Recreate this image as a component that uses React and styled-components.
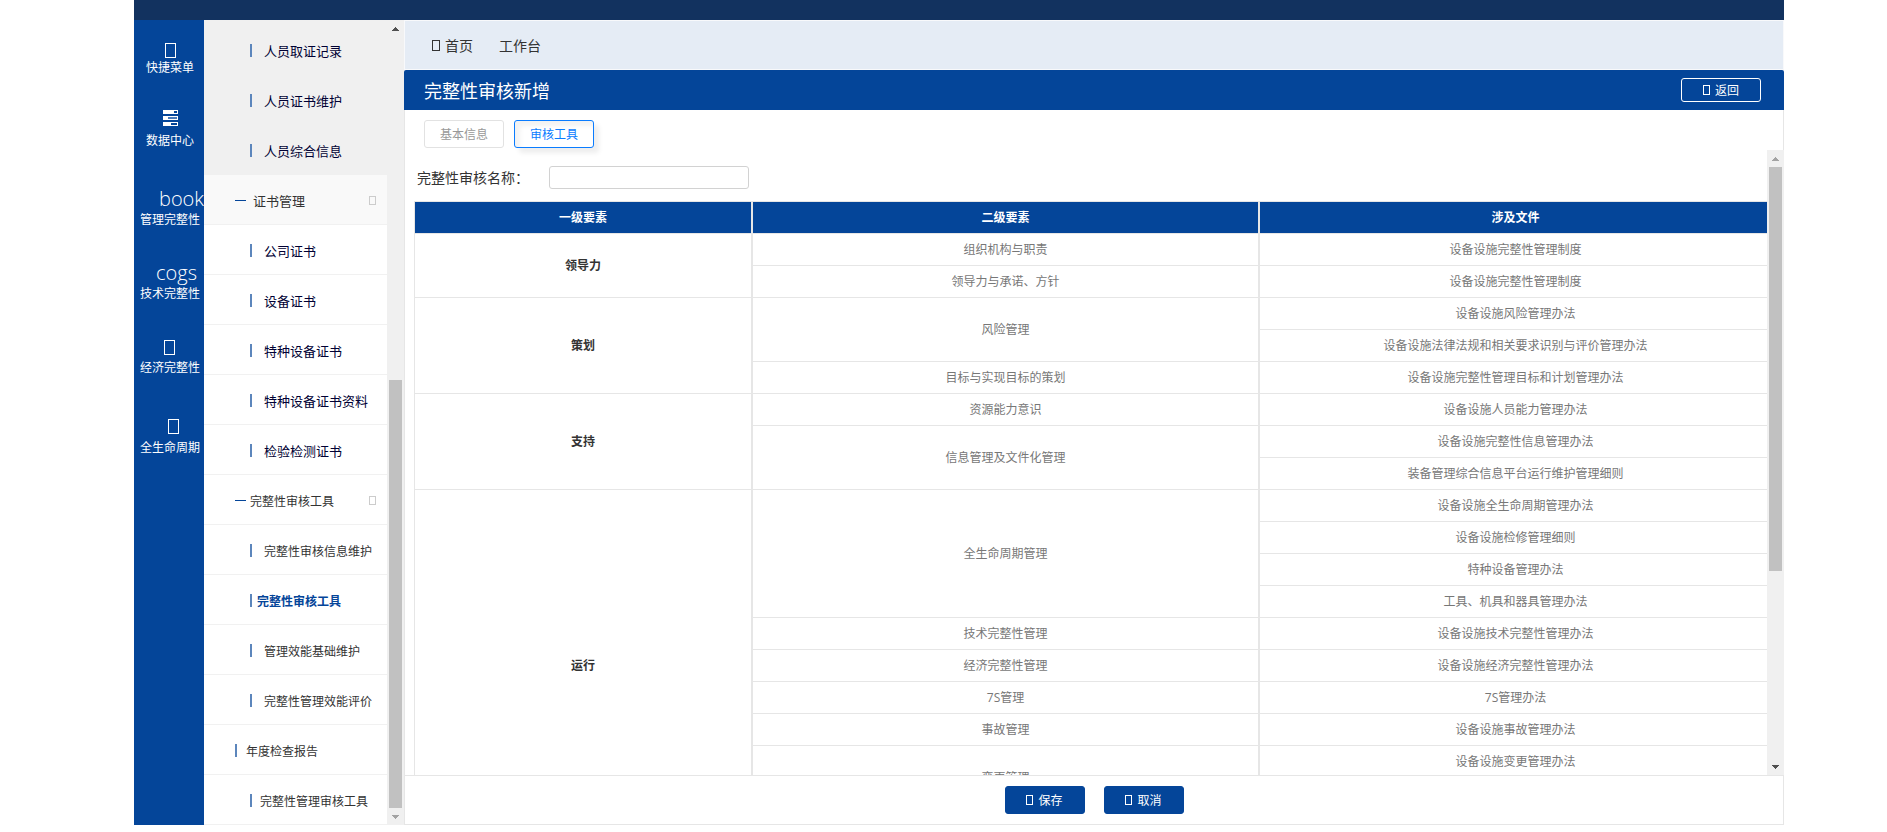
import React from 'react';
import styled, { createGlobalStyle } from 'styled-components';

const blue = '#044599';
const line = '#e6e6e6';

const GlobalStyle = createGlobalStyle`
  * {
    box-sizing: border-box;
  }
  body {
    margin: 0;
    background: #fff;
    color: #333;
    font-family: 'Open Sans', 'Noto Sans CJK SC', sans-serif;
    font-size: 12px;
    font-weight: 400;
  }
  button, input {
    font: inherit;
  }
  a {
    color: inherit;
    text-decoration: none;
  }
`;

const Page = styled.div`
  display: flex;
  flex-direction: column;
  height: calc(100vh - 7px);
  margin: 0 103px 0 134px;
`;

const TopBar = styled.header`
  flex: none;
  height: 20px;
  background: #12325f;
`;

const Columns = styled.div`
  display: flex;
  flex: 1;
  min-height: 0;
`;

const Rail = styled.nav`
  flex: none;
  width: 70px;
  padding-top: 1px;
  overflow: hidden;
  background: ${blue};
  color: #fff;
`;

const RailItem = styled.a`
  display: flex;
  flex-direction: column;
  justify-content: flex-end;
  align-items: center;
  height: ${(props) => props.$height}px;
  line-height: 16px;
  white-space: nowrap;
`;

const RailIcon = styled.span`
  display: flex;
  align-items: center;
  height: ${(props) => props.$height || 24}px;
  padding-left: ${(props) => props.$indent || 0}px;
  font-size: 20px;
  font-weight: 300;
  line-height: 24px;
`;

const RailLabel = styled.span`
  padding-left: 2px;
`;

const Menu = styled.nav`
  flex: none;
  display: flex;
  width: 200px;
  background: #f0f0f0;
`;

const MenuList = styled.div`
  flex: 1;
  padding-top: 5px;
  overflow: hidden;
`;

const MenuItem = styled.a`
  display: flex;
  align-items: center;
  gap: ${(props) => props.$gap || 12}px;
  height: 50px;
  padding: 2px 11px 0 ${(props) => (props.$top ? 31 : 46)}px;
  border-bottom: 1px solid ${(props) => (props.$tone === 'grey' ? '#f0f0f0' : '#f1f1f1')};
  background: ${(props) => ({ grey: '#f0f0f0', open: '#f9f9f9' }[props.$tone] || '#fff')};
  color: ${(props) => (props.$active ? blue : props.$big ? '#003' : '#333')};
  font-size: ${(props) => (props.$big || props.$tone === 'open' ? 13 : 12)}px;
  font-weight: ${(props) => (props.$active ? 700 : 400)};
  white-space: nowrap;
`;

const Pipe = styled.span`
  width: 2px;
  height: 13px;
  background: #5c86bc;
`;

const Dash = styled.span`
  width: 11px;
  height: 1px;
  background: ${blue};
`;

const Spacer = styled.span`
  flex: 1;
`;

const Bar = styled.div`
  flex: none;
  display: flex;
  flex-direction: column;
  width: 17px;
  padding: 0 2px;
  background: #f0f0f0;
`;

const BarEnd = styled.div`
  flex: none;
  display: flex;
  align-items: center;
  justify-content: center;
  height: 17px;
`;

const BarGap = styled.div`
  flex: ${(props) => props.$grow} 0 0;
`;

const BarThumb = styled(BarGap)`
  background: #c1c1c1;
`;

const Main = styled.main`
  flex: 1;
  display: flex;
  flex-direction: column;
  min-width: 0;
`;

const Crumbs = styled.nav`
  flex: none;
  display: flex;
  align-items: center;
  gap: 26px;
  height: 50px;
  padding: 0 27px;
  border: 1px solid #f8f9fb;
  background: #e5ecf5;
  font-size: 14px;

  a {
    display: flex;
    align-items: center;
    gap: 5px;
  }
`;

const TitleBar = styled.div`
  flex: none;
  display: flex;
  align-items: center;
  justify-content: space-between;
  height: 40px;
  padding: 0 23px 0 20px;
  border-radius: 2px 2px 0 0;
  background: ${blue};
  color: #fff;
`;

const Title = styled.h1`
  margin: 0;
  font-size: 18px;
  font-weight: 400;
`;

const Button = styled.button`
  display: flex;
  align-items: center;
  justify-content: center;
  gap: 5px;
  width: 80px;
  height: ${(props) => (props.$outline ? 24 : 28)}px;
  padding: 0;
  border: 1px solid ${(props) => (props.$outline ? '#fff' : blue)};
  border-radius: 3px;
  background: ${blue};
  color: #fff;
`;

const Tabs = styled.div`
  flex: none;
  display: flex;
  gap: 10px;
  height: 40px;
  padding: 10px 19px 0;
  border: solid ${line};
  border-width: 0 1px;
`;

const Tab = styled.button`
  width: 80px;
  height: 28px;
  padding: 0;
  border: 1px solid ${(props) => (props.$active ? '#0a7cff' : '#e2e2e2')};
  border-radius: 3px;
  background: #fff;
  box-shadow: ${(props) => (props.$active ? '5px 5px 5px #eee, inset 5px 5px 5px #f2f2f2' : 'none')};
  color: ${(props) => (props.$active ? '#0a7cff' : '#999')};
`;

const Body = styled.div`
  flex: 1;
  display: flex;
  min-height: 0;
  border-left: 1px solid ${line};
`;

const Scroll = styled.div`
  flex: 1;
  min-width: 0;
  padding: 16px 0 0 9px;
  overflow: hidden;
`;

const Field = styled.div`
  display: flex;
  align-items: center;
  margin-bottom: 12px;
`;

const Label = styled.label`
  width: 135px;
  padding-left: 3px;
  font-size: 14px;
  line-height: 22px;
`;

const Input = styled.input`
  width: 200px;
  height: 23px;
  padding: 0 6px;
  border: 1px solid #d2d2d2;
  border-radius: 3px;
`;

const Table = styled.table`
  width: 100%;
  table-layout: fixed;
  border-spacing: 0;
  border: solid ${line};
  border-width: 1px 0 0 1px;
  color: #777;
  text-align: center;

  th, td {
    height: 32px;
    padding: 0 0 2px;
    border: solid ${line};
    border-width: 0 2px 1px 0;
  }
  th:last-child, td:last-child {
    padding-left: 4px;
    border-right: 0;
  }
  thead th {
    background: ${blue};
    color: #fff;
    font-weight: 700;
  }
  tbody th {
    color: #333;
    font-weight: 700;
  }
`;

const Footer = styled.footer`
  flex: none;
  display: flex;
  align-items: center;
  justify-content: center;
  gap: 19px;
  height: 50px;
  border: 1px solid ${line};
`;

const railItems = [
  { label: '快捷菜单', icon: 'box', height: 55, indent: 3, iconHeight: 20 },
  { label: '数据中心', icon: 'server', height: 73, indent: 2, iconHeight: 30 },
  { label: '管理完整性', text: 'book', height: 79, indent: 25, iconHeight: 26 },
  { label: '技术完整性', text: 'cogs', height: 74, indent: 15, iconHeight: 26 },
  { label: '经济完整性', icon: 'box', height: 74, indent: 1, iconHeight: 26 },
  { label: '全生命周期', icon: 'box', height: 80, indent: 9, iconHeight: 28 },
];

const menuItems = [
  { label: '人员取证记录', tone: 'grey', big: true },
  { label: '人员证书维护', tone: 'grey', big: true },
  { label: '人员综合信息', tone: 'grey', big: true },
  { label: '证书管理', tone: 'open', group: true, gap: 7 },
  { label: '公司证书', big: true },
  { label: '设备证书', big: true },
  { label: '特种设备证书', big: true },
  { label: '特种设备证书资料', big: true },
  { label: '检验检测证书', big: true },
  { label: '完整性审核工具', group: true, gap: 4 },
  { label: '完整性审核信息维护' },
  { label: '完整性审核工具', active: true, gap: 5 },
  { label: '管理效能基础维护' },
  { label: '完整性管理效能评价' },
  { label: '年度检查报告', top: true, gap: 9 },
  { label: '完整性管理审核工具', gap: 8 },
];

// [level one, its rows, [[level two, files], ...]]
const elements = [
  ['领导力', 2, [
    ['组织机构与职责', ['设备设施完整性管理制度']],
    ['领导力与承诺、方针', ['设备设施完整性管理制度']],
  ]],
  ['策划', 3, [
    ['风险管理', ['设备设施风险管理办法', '设备设施法律法规和相关要求识别与评价管理办法']],
    ['目标与实现目标的策划', ['设备设施完整性管理目标和计划管理办法']],
  ]],
  ['支持', 3, [
    ['资源能力意识', ['设备设施人员能力管理办法']],
    ['信息管理及文件化管理', ['设备设施完整性信息管理办法', '装备管理综合信息平台运行维护管理细则']],
  ]],
  ['运行', 11, [
    ['全生命周期管理', ['设备设施全生命周期管理办法', '设备设施检修管理细则', '特种设备管理办法', '工具、机具和器具管理办法']],
    ['技术完整性管理', ['设备设施技术完整性管理办法']],
    ['经济完整性管理', ['设备设施经济完整性管理办法']],
    ['7S管理', ['7S管理办法']],
    ['事故管理', ['设备设施事故管理办法']],
    ['变更管理', ['设备设施变更管理办法', '']],
    ['', ['']],
  ]],
];

const Glyph = ({ width, height, color = 'currentColor' }) => (
  <svg width={width} height={height} aria-hidden="true">
    <rect x="0.5" y="0.5" width={width - 1} height={height - 1} fill="none" stroke={color} />
  </svg>
);

const ServerIcon = () => (
  <svg width="15" height="16" shapeRendering="crispEdges" aria-hidden="true">
    <path fill="#fff" d="M0 0h15v4H0zM0 6h15v4H0zM0 12h15v4H0z" />
    <path fill={blue} d="M11 1h3v2h-3zM8 13h6v2H8z" />
    <path fill="#4a7ab8" d="M5 7h9v2H5z" />
  </svg>
);

const Arrow = ({ down, color }) => (
  <svg width="7" height="4" shapeRendering="crispEdges" aria-hidden="true">
    <path fill={color} d={down ? 'M0 0h7v1H6v1H5v1H4v1H3V3H2V2H1V1H0z' : 'M3 0h1v1h1v1h1v1h1v1H0V3h1V2h1V1h1z'} />
  </svg>
);

const ScrollBar = ({ before, thumb, after, upColor, downColor }) => (
  <Bar aria-hidden="true">
    <BarEnd><Arrow color={upColor} /></BarEnd>
    <BarGap $grow={before} />
    <BarThumb $grow={thumb} />
    <BarGap $grow={after} />
    <BarEnd><Arrow down color={downColor} /></BarEnd>
  </Bar>
);

const ElementRows = ({ element }) => {
  const [name, span, children] = element;
  return children.map(([child, files], i) => files.map((file, j) => (
    <tr key={`${i}-${j}`}>
      {i === 0 && j === 0 ? <th scope="rowgroup" rowSpan={span}>{name}</th> : null}
      {j === 0 ? <td rowSpan={files.length}>{child}</td> : null}
      <td>{file}</td>
    </tr>
  )));
};

class App extends React.Component {
  constructor(props) {
    super(props);
    this.state = {
      name: '',
      tab: '审核工具'
    };
    this.handleName = this.handleName.bind(this);
  }

  handleName(event) {
    this.setState({ name: event.target.value });
  }

  render() {
    return (
      <Page>
        <GlobalStyle />
        <TopBar />
        <Columns>
          <Rail>
            {railItems.map((item) => (
              <RailItem href="#" key={item.label} $height={item.height}>
                <RailIcon $indent={item.indent} $height={item.iconHeight}>
                  {item.icon === 'box' ? <Glyph width={11} height={15} /> : null}
                  {item.icon === 'server' ? <ServerIcon /> : null}
                  {item.text}
                </RailIcon>
                <RailLabel>{item.label}</RailLabel>
              </RailItem>
            ))}
          </Rail>
          <Menu>
            <MenuList>
              {menuItems.map((item, i) => (
                <MenuItem
                  href="#"
                  key={i}
                  $tone={item.tone}
                  $big={item.big}
                  $top={item.top || item.group}
                  $gap={item.gap}
                  $active={item.active}
                >
                  {item.group ? <Dash /> : <Pipe />}
                  {item.label}
                  {item.group ? <Spacer /> : null}
                  {item.group ? <Glyph width={7} height={9} color="#ccc" /> : null}
                </MenuItem>
              ))}
            </MenuList>
            <ScrollBar before={343} thumb={428} after={0} upColor="#505050" downColor="#a3a3a3" />
          </Menu>
          <Main>
            <Crumbs>
              <a href="#"><Glyph width={8} height={11} />首页</a>
              <a href="#">工作台</a>
            </Crumbs>
            <TitleBar>
              <Title>完整性审核新增</Title>
              <Button type="button" $outline><Glyph width={7} height={10} />返回</Button>
            </TitleBar>
            <Tabs>
              {['基本信息', '审核工具'].map((tab) => (
                <Tab type="button" key={tab} $active={this.state.tab === tab} onClick={() => this.setState({ tab })}>{tab}</Tab>
              ))}
            </Tabs>
            <Body>
              <Scroll>
                <Field>
                  <Label htmlFor="auditName">完整性审核名称：</Label>
                  <Input id="auditName" type="text" value={this.state.name} onChange={this.handleName} />
                </Field>
                <Table>
                  <colgroup>
                    <col width="25%" />
                    <col />
                    <col />
                  </colgroup>
                  <thead>
                    <tr>
                      <th scope="col">一级要素</th>
                      <th scope="col">二级要素</th>
                      <th scope="col">涉及文件</th>
                    </tr>
                  </thead>
                  <tbody>
                    {elements.map((element) => <ElementRows key={element[0]} element={element} />)}
                  </tbody>
                </Table>
              </Scroll>
              <ScrollBar before={0} thumb={404} after={187} upColor="#a3a3a3" downColor="#505050" />
            </Body>
            <Footer>
              <Button type="button"><Glyph width={7} height={10} />保存</Button>
              <Button type="button"><Glyph width={7} height={10} />取消</Button>
            </Footer>
          </Main>
        </Columns>
      </Page>
    );
  }
}

export default App;
